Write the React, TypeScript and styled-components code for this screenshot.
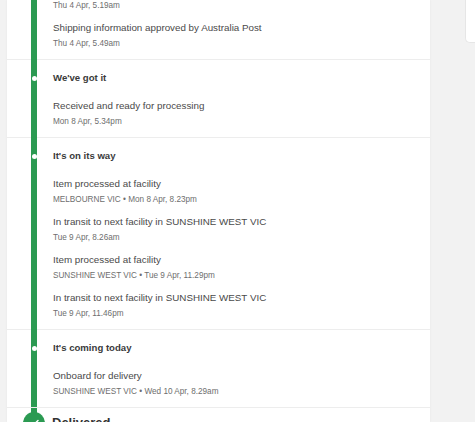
import React from "react";
import styled, { createGlobalStyle } from "styled-components";

const Global = createGlobalStyle`
  html, body { margin: 0; padding: 0; background: #f2f2f2; overflow: hidden; }
  body { font-family: "Liberation Sans", Arial, sans-serif; }
`;

const Page = styled.div`
  display: grid;
  grid-template-columns: 7px 423px 1fr;
  height: 422px;
  overflow: hidden;
  background: #f2f2f2;
`;

const SideGap = styled.div``;

const Aside = styled.div`
  display: flex;
  justify-content: flex-end;
  align-items: flex-start;
`;

const SideBox = styled.div`
  width: 9px;
  height: 42px;
  background: #fff;
  border-left: 1px solid #e6e6e6;
  border-bottom: 1px solid #e6e6e6;
  border-bottom-left-radius: 5px;
`;

const Card = styled.div`
  background: #fff;
  overflow: hidden;
  box-shadow: 0 0 2px rgba(0, 0, 0, 0.06);
`;

const Timeline = styled.div`
  position: relative;
  margin-top: -28px;
  &::after {
    content: "";
    position: absolute;
    left: 24px;
    top: 0;
    bottom: 0;
    width: 6px;
    background: #2b9a52;
  }
`;

const Section = styled.section<{ $first?: boolean }>`
  display: flex;
  flex-direction: column;
  gap: 9px;
  padding: 11px 0 9px 46px;
  border-top: ${(p) => (p.$first ? "none" : "1px solid #ededed")};
`;

const Heading = styled.h3`
  position: relative;
  margin: 0 0 5px;
  font-size: 9.6px;
  line-height: 14px;
  font-weight: 700;
  color: #3a3a3a;
  &::before {
    content: "";
    position: absolute;
    left: -21.5px;
    top: 4.5px;
    width: 5px;
    height: 5px;
    border-radius: 50%;
    background: #fff;
    z-index: 1;
  }
`;

const Event = styled.div`
  display: flex;
  flex-direction: column;
  gap: 3px;
`;

const Title = styled.div`
  font-size: 9.8px;
  line-height: 14px;
  color: #4a4a4a;
`;

const Sub = styled.div`
  font-size: 8.2px;
  line-height: 12px;
  color: #6e6e6e;
`;

const Delivered = styled.div`
  display: flex;
  align-items: center;
  gap: 7px;
  padding: 4px 0 0 16px;
  border-top: 1px solid #ededed;
  position: relative;
  z-index: 2;
`;

const Badge = styled.div`
  width: 22px;
  height: 22px;
  border-radius: 50%;
  background: #2b9a52;
  display: flex;
  align-items: center;
  justify-content: center;
`;

const DeliveredText = styled.div`
  font-size: 13px;
  line-height: 16px;
  font-weight: 700;
  color: #333;
`;

type Ev = { title: string; sub: string };
type Sec = { heading?: string; events: Ev[] };

const sections: Sec[] = [
  {
    events: [
      { title: "Shipping information received by Australia Post", sub: "Thu 4 Apr, 5.19am" },
      { title: "Shipping information approved by Australia Post", sub: "Thu 4 Apr, 5.49am" },
    ],
  },
  {
    heading: "We've got it",
    events: [{ title: "Received and ready for processing", sub: "Mon 8 Apr, 5.34pm" }],
  },
  {
    heading: "It's on its way",
    events: [
      { title: "Item processed at facility", sub: "MELBOURNE VIC • Mon 8 Apr, 8.23pm" },
      { title: "In transit to next facility in SUNSHINE WEST VIC", sub: "Tue 9 Apr, 8.26am" },
      { title: "Item processed at facility", sub: "SUNSHINE WEST VIC • Tue 9 Apr, 11.29pm" },
      { title: "In transit to next facility in SUNSHINE WEST VIC", sub: "Tue 9 Apr, 11.46pm" },
    ],
  },
  {
    heading: "It's coming today",
    events: [{ title: "Onboard for delivery", sub: "SUNSHINE WEST VIC • Wed 10 Apr, 8.29am" }],
  },
];

export default function App() {
  return (
    <>
      <Global />
      <Page>
        <SideGap />
        <Card>
          <Timeline>
            {sections.map((s, i) => (
              <Section key={i} $first={i === 0}>
                {s.heading && <Heading>{s.heading}</Heading>}
                {s.events.map((e, j) => (
                  <Event key={j}>
                    <Title>{e.title}</Title>
                    <Sub>{e.sub}</Sub>
                  </Event>
                ))}
              </Section>
            ))}
            <Delivered>
              <Badge>
                <svg width="12" height="12" viewBox="0 0 24 24" fill="none" stroke="#fff" strokeWidth="3" strokeLinecap="round" strokeLinejoin="round">
                  <path d="M5 12l5 5L20 7" />
                </svg>
              </Badge>
              <DeliveredText>Delivered</DeliveredText>
            </Delivered>
          </Timeline>
        </Card>
        <Aside>
          <SideBox />
        </Aside>
      </Page>
    </>
  );
}
